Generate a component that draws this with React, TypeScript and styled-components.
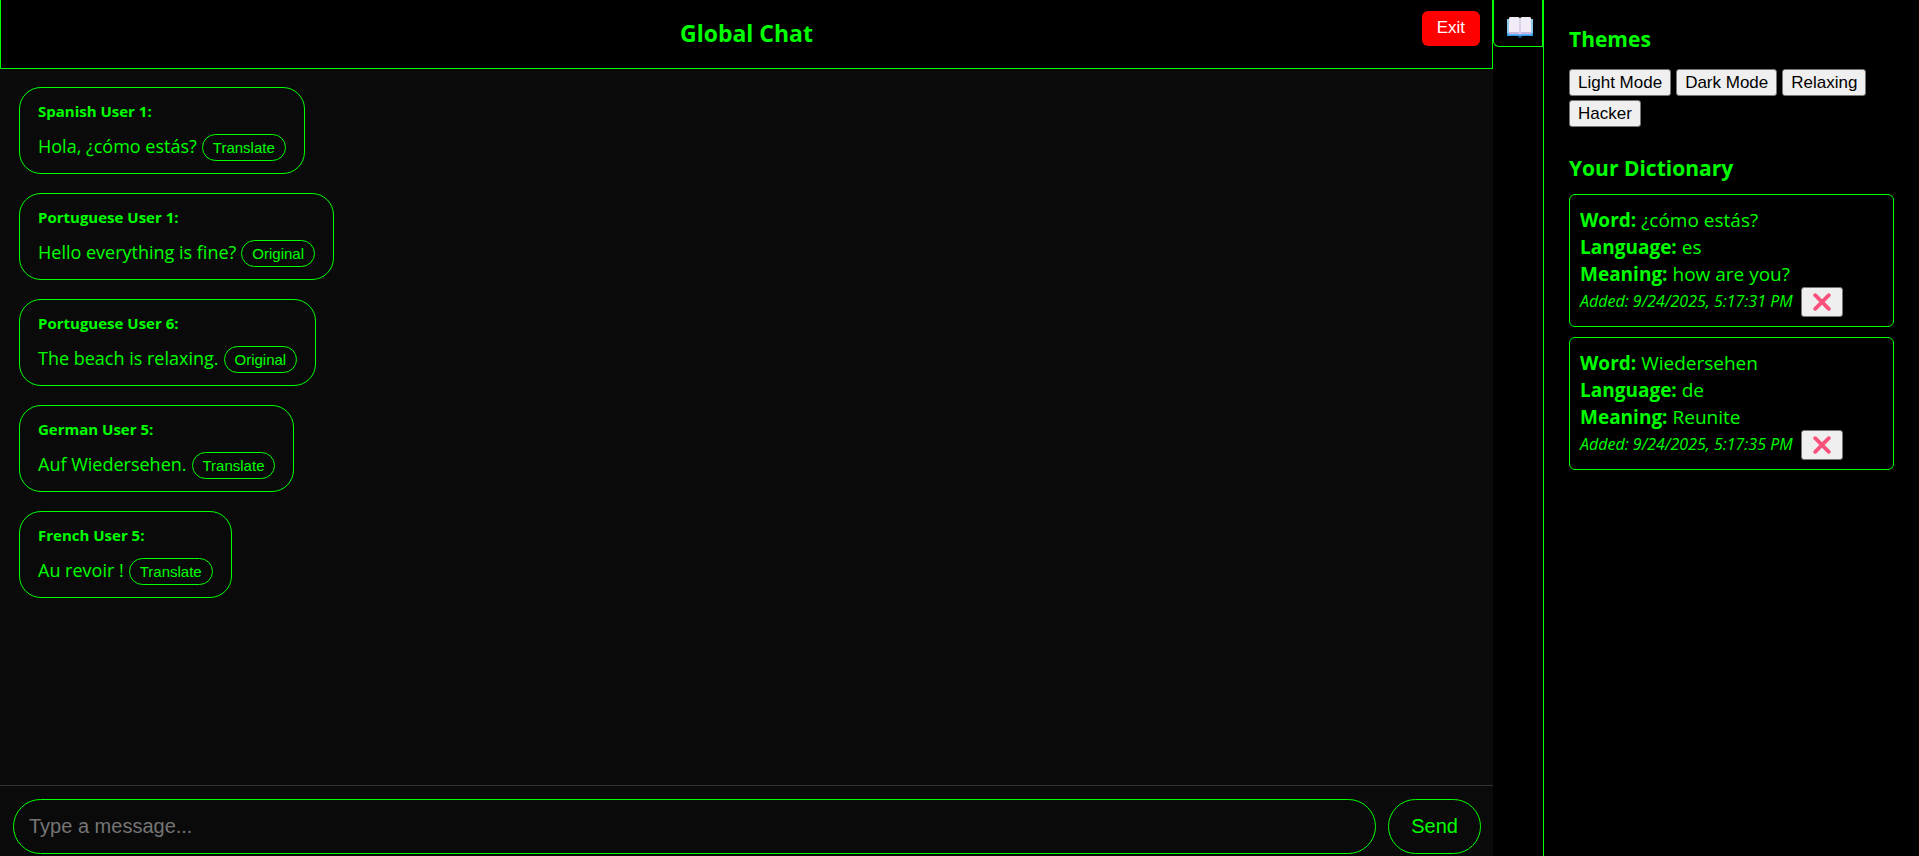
import React from "react";
import styled, { createGlobalStyle } from "styled-components";

const green = "#00ff00";
const uiFont = `"Segoe UI", "Open Sans", "Noto Sans", sans-serif`;
const controlFont = `"Liberation Sans", Arial, sans-serif`;

const GlobalStyle = createGlobalStyle`
  *, *::before, *::after { box-sizing: border-box; }
  body { margin: 0; background: #000; color: ${green}; font-family: ${uiFont}; }
  button, input { font-family: ${controlFont}; }
`;

const Page = styled.div`
  display: flex;
  height: 100vh;
  overflow: hidden;
`;

const Chat = styled.main`
  flex: 1;
  min-width: 0;
  display: flex;
  flex-direction: column;
  background: #0a0a0a;
`;

const Header = styled.header`
  display: grid;
  grid-template-columns: 1fr auto 1fr;
  align-items: start;
  padding: 11px 12px 19px;
  background: #000;
  border: 1px solid ${green};
  border-top: 0;
`;

const Title = styled.h1`
  grid-column: 2;
  margin: 6px 0 0;
  font-size: 23px;
  line-height: 32px;
  font-weight: 700;
`;

const ExitButton = styled.button`
  justify-self: end;
  height: 35px;
  padding: 0 15px 2px;
  border: 0;
  border-radius: 6px;
  background: #ff0000;
  color: #fff;
  font-size: 17px;
`;

const Messages = styled.section`
  flex: 1;
  min-height: 0;
  overflow: hidden;
  display: flex;
  flex-direction: column;
  align-items: flex-start;
  gap: 19px;
  padding: 18px 19px;
`;

const Bubble = styled.article`
  flex: none;
  height: 87px;
  padding: 11px 18px;
  border: 1px solid ${green};
  border-radius: 22px;
`;

const Sender = styled.strong`
  display: block;
  font-size: 15px;
  line-height: 24px;
`;

const MessageLine = styled.div`
  display: flex;
  align-items: baseline;
  gap: 5px;
  margin-top: 10px;
  font-size: 18px;
  line-height: 27px;
`;

const PillButton = styled.button`
  height: 27px;
  padding: 0 10px;
  border: 1px solid ${green};
  border-radius: 14px;
  background: transparent;
  color: ${green};
  font-size: 15px;
`;

const Composer = styled.form`
  display: flex;
  gap: 12px;
  padding: 13px 12px 2px 13px;
  border-top: 1px solid #333;
`;

const MessageInput = styled.input`
  flex: 1;
  min-width: 0;
  height: 55px;
  padding: 0 15px;
  border: 1px solid ${green};
  border-radius: 28px;
  background: transparent;
  color: ${green};
  font-size: 20px;
  outline: 0;
  &::placeholder { color: #757575; opacity: 1; }
`;

const SendButton = styled.button`
  height: 55px;
  padding: 0 22px;
  border: 1px solid ${green};
  border-radius: 28px;
  background: transparent;
  color: ${green};
  font-size: 20px;
`;

const Rail = styled.div`
  flex: none;
  width: 50px;
`;

const ToggleButton = styled.button`
  display: flex;
  align-items: center;
  justify-content: center;
  width: 50px;
  height: 47px;
  padding: 8px 0 0 4px;
  border: 1px solid ${green};
  border-top: 0;
  border-radius: 0 0 0 6px;
  background: #000;
`;

const Sidebar = styled.aside`
  flex: none;
  width: 376px;
  padding: 25px;
  border-left: 1px solid ${green};
`;

const SectionTitle = styled.h2`
  margin: 0;
  font-size: 21px;
  line-height: 28px;
  font-weight: 700;
`;

const ThemeButtons = styled.div`
  display: flex;
  flex-wrap: wrap;
  gap: 4px 5px;
  margin: 16px 0 27px;
`;

const PlainButton = styled.button`
  display: inline-flex;
  align-items: center;
  justify-content: center;
  height: 27px;
  padding: 0 8px;
  border: 1px solid #767676;
  border-radius: 3px;
  background: #efefef;
  color: #000;
  font-size: 17px;
`;

const DeleteButton = styled(PlainButton)`
  width: 42px;
  height: 30px;
  padding: 0;
`;

const Entries = styled.ul`
  display: grid;
  gap: 10px;
  margin: 12px 0 0;
  padding: 0;
  list-style: none;
`;

const Entry = styled.li`
  height: 133px;
  padding: 12px 10px;
  border: 1px solid ${green};
  border-radius: 6px;
  font-size: 19px;
  line-height: 27px;
`;

const Added = styled.div`
  display: flex;
  align-items: center;
  gap: 8px;
  height: 27px;
  font-size: 16px;
  font-style: italic;
`;

const BookIcon = () => (
  <svg width="26" height="22" viewBox="0 0 26 22" aria-hidden="true">
    <path d="M0 3h26v17H15l-2 2-2-2H0z" fill="#2f9ae6" />
    <path d="M0 3h2v14H0zM24 3h2v14h-2z" fill="#8fc8e8" />
    <path d="M11 20h4l-2 2z" fill="#174f9c" />
    <path d="M1 17h24v2H1z" fill="#55b5f4" />
    <path d="M2 2q0-1 2-1h7l2 1 2-1h7q2 0 2 1v15h-9l-2 1-2-1H2z" fill="#f1ecf8" />
    <path d="M2 16h9l2 1 2-1h9v2h-9l-2 1-2-1H2z" fill="#c9b6e2" />
    <path d="M12.400 2h1.200v16h-1.200z" fill="#cdc0e0" />
  </svg>
);

const CrossIcon = () => (
  <svg width="18" height="18" viewBox="0 0 18 18" aria-hidden="true">
    <path d="M2.200 2.200l13.600 13.600M15.800 2.200L2.200 15.800" stroke="#f8527c" strokeWidth="3.800" strokeLinecap="round" />
  </svg>
);

const messages = [
  { sender: "Spanish User 1:", text: "Hola, ¿cómo estás?", action: "Translate" },
  { sender: "Portuguese User 1:", text: "Hello everything is fine?", action: "Original" },
  { sender: "Portuguese User 6:", text: "The beach is relaxing.", action: "Original" },
  { sender: "German User 5:", text: "Auf Wiedersehen.", action: "Translate" },
  { sender: "French User 5:", text: "Au revoir !", action: "Translate" },
];

const themes = ["Light Mode", "Dark Mode", "Relaxing", "Hacker"];

const entries = [
  { word: "¿cómo estás?", language: "es", meaning: "how are you?", added: "9/24/2025, 5:17:31 PM" },
  { word: "Wiedersehen", language: "de", meaning: "Reunite", added: "9/24/2025, 5:17:35 PM" },
];

export default function App() {
  return (
    <Page>
      <GlobalStyle />
      <Chat>
        <Header>
          <Title>Global Chat</Title>
          <ExitButton type="button">Exit</ExitButton>
        </Header>
        <Messages>
          {messages.map((m) => (
            <Bubble key={m.sender}>
              <Sender>{m.sender}</Sender>
              <MessageLine>
                <span>{m.text}</span>
                <PillButton type="button">{m.action}</PillButton>
              </MessageLine>
            </Bubble>
          ))}
        </Messages>
        <Composer onSubmit={(e) => e.preventDefault()}>
          <MessageInput type="text" aria-label="Message" placeholder="Type a message..." />
          <SendButton type="submit">Send</SendButton>
        </Composer>
      </Chat>
      <Rail>
        <ToggleButton type="button" aria-label="Toggle dictionary">
          <BookIcon />
        </ToggleButton>
      </Rail>
      <Sidebar>
        <SectionTitle>Themes</SectionTitle>
        <ThemeButtons>
          {themes.map((t) => (
            <PlainButton key={t} type="button">{t}</PlainButton>
          ))}
        </ThemeButtons>
        <SectionTitle>Your Dictionary</SectionTitle>
        <Entries>
          {entries.map((e) => (
            <Entry key={e.word}>
              <div><strong>Word:</strong> {e.word}</div>
              <div><strong>Language:</strong> {e.language}</div>
              <div><strong>Meaning:</strong> {e.meaning}</div>
              <Added>
                <span>Added: {e.added}</span>
                <DeleteButton type="button" aria-label={`Delete ${e.word}`}>
                  <CrossIcon />
                </DeleteButton>
              </Added>
            </Entry>
          ))}
        </Entries>
      </Sidebar>
    </Page>
  );
}
